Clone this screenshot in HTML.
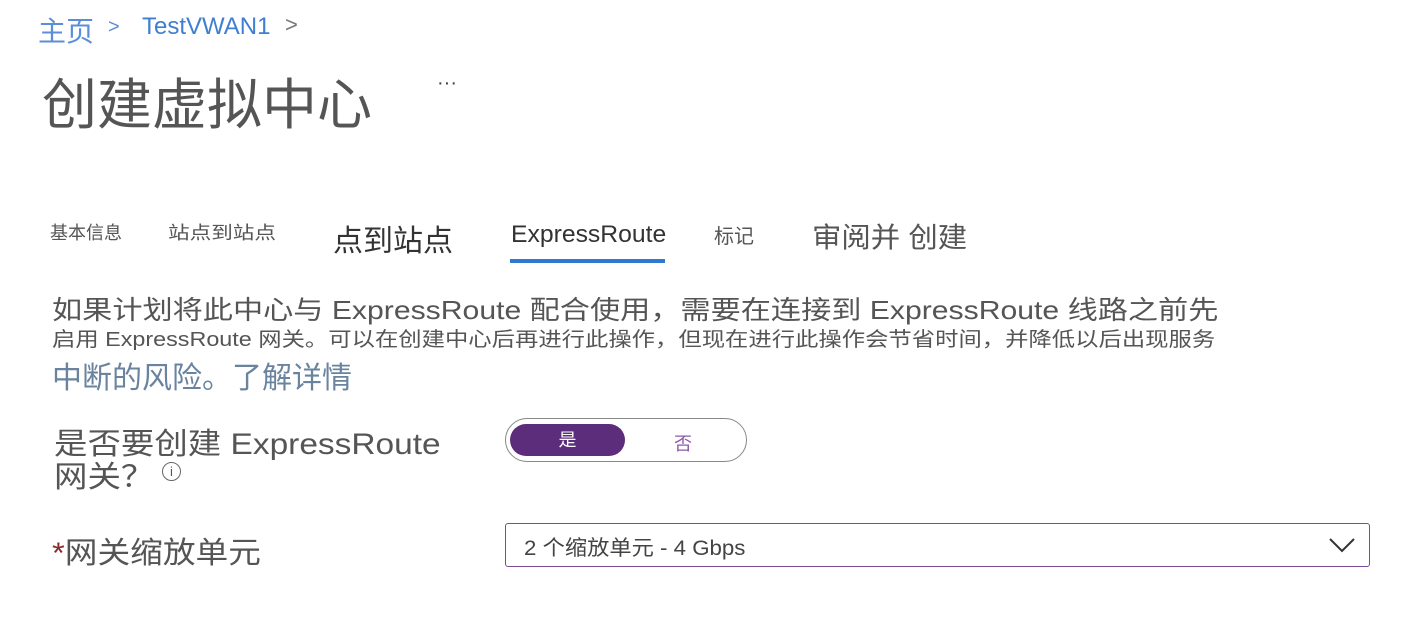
<!DOCTYPE html>
<html><head><meta charset="utf-8"><style>
body{margin:0;width:1413px;height:617px;background:#fff;position:relative;overflow:hidden;font-family:"Liberation Sans","Noto Sans CJK SC",sans-serif;color:#505050}
.a{position:absolute;white-space:nowrap;transform-origin:0 0}
</style></head><body>
<div class="a" style="left:38px;top:10px;font-size:28px;color:#5b8ed6">主页</div>
<div class="a" style="left:108px;top:16px;font-size:20px;color:#5b8ed6">&gt;</div>
<div class="a" style="left:142px;top:13px;font-size:24px;color:#3f7fd1">TestVWAN1</div>
<div class="a" style="left:285px;top:12px;font-size:22px;color:#777">&gt;</div>
<div class="a" style="left:42px;top:60px;font-size:55px;color:#555">创建虚拟中心</div>
<div class="a" style="left:437px;top:72px;font-size:20px;color:#444">···</div>
<div class="a" style="left:50px;top:219px;font-size:18px;color:#555">基本信息</div>
<div class="a" style="left:168px;top:219px;font-size:18px;color:#555;transform:scaleX(1.2)">站点到站点</div>
<div class="a" style="left:333px;top:216px;font-size:30px;color:#333">点到站点</div>
<div class="a" style="left:511px;top:221px;font-size:24px;color:#333;transform:scaleX(1.03)">ExpressRoute</div>
<div class="a" style="left:510px;top:259px;width:155px;height:4px;background:#2f79d4"></div>
<div class="a" style="left:714px;top:220px;font-size:20px;color:#555">标记</div>
<div class="a" style="left:812px;top:216px;font-size:28px;color:#555;transform:scaleX(1.05)">审阅并 创建</div>
<div class="a" style="left:52px;top:290px;font-size:26px;color:#555;transform:scaleX(1.16)">如果计划将此中心与 ExpressRoute 配合使用，需要在连接到 ExpressRoute 线路之前先</div>
<div class="a" style="left:52px;top:323px;font-size:20px;color:#555;transform:scaleX(1.167)">启用 ExpressRoute 网关。可以在创建中心后再进行此操作，但现在进行此操作会节省时间，并降低以后出现服务</div>
<div class="a" style="left:52px;top:353px;font-size:30px;color:#6a84a0">中断的风险。了解详情</div>
<div class="a" style="left:54px;top:428px;font-size:30px;color:#555;line-height:33px;transform:scaleX(1.115)">是否要创建 ExpressRoute<br>网关？</div>
<div class="a" style="left:162px;top:462px;width:17px;height:17px;border:1.5px solid #666;border-radius:50%;font-size:13px;text-align:center;line-height:17px;color:#555">i</div>
<div class="a" style="left:505px;top:418px;width:240px;height:42px;border:1px solid #888;border-radius:22px"></div>
<div class="a" style="left:510px;top:424px;width:115px;height:32px;background:#5c2d7a;border-radius:16px;color:#fff;font-size:18px;text-align:center;line-height:32px">是</div>
<div class="a" style="left:674px;top:430px;font-size:18px;color:#8a5aa8">否</div>
<div class="a" style="left:52px;top:528px;font-size:30px;color:#555;transform:scaleX(1.09)"><span style="color:#8b2a2a">*</span>网关缩放单元</div>
<div class="a" style="left:505px;top:523px;width:863px;height:42px;border:1px solid #7b4d99;border-radius:3px"></div>
<div class="a" style="left:524px;top:532px;font-size:21px;color:#444;transform:scaleX(1.06)">2 个缩放单元 - 4 Gbps</div>
<svg class="a" style="left:1328px;top:536px" width="28" height="18"><path d="M2 3 L14 15 L26 3" fill="none" stroke="#333" stroke-width="2"/></svg>
</body></html>
